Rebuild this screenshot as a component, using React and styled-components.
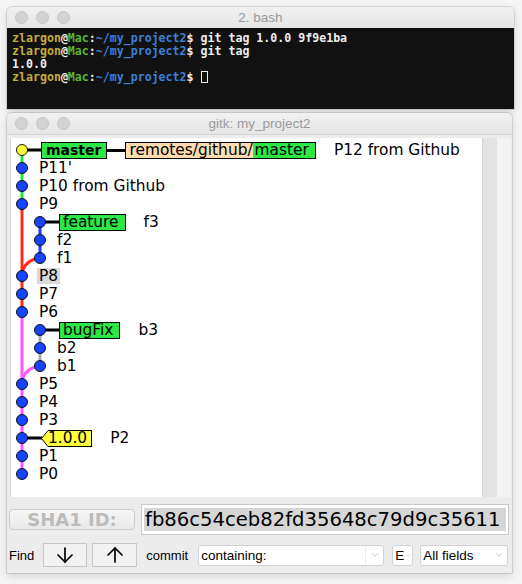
import React from 'react';
import styled, { createGlobalStyle } from 'styled-components';
import { ArrowDown, ArrowUp, ChevronDown } from 'lucide-react';

const GlobalStyle = createGlobalStyle`
  html, body {
    margin: 0;
    padding: 0;
    background: #f5f5f5;
  }
  body {
    font-family: "Liberation Sans", Arial, sans-serif;
  }
`;

const Page = styled.div`
  width: 522px;
  height: 584px;
  box-sizing: border-box;
  padding: 7px 0 0 7px;
  display: flex;
  flex-direction: column;
  gap: 4px;
  overflow: hidden;
`;

const Window = styled.div`
  width: ${(p) => p.$width}px;
  background: #ececec;
  border-radius: 5px 5px 0 0;
  box-shadow: 0 0 0 1px rgba(0, 0, 0, 0.1), 0 3px 9px rgba(0, 0, 0, 0.14);
  overflow: hidden;
  display: flex;
  flex-direction: column;
`;

const TitleBar = styled.div`
  height: 21px;
  display: grid;
  grid-template-columns: 1fr auto 1fr;
  align-items: center;
  padding: 0 8px;
  background: linear-gradient(#f0f0f0, #e6e6e6);
  border-bottom: 1px solid ${(p) => (p.$dark ? '#111' : '#d4d4d4')};
`;

const Lights = styled.div`
  display: flex;
  gap: 8px;
`;

const Light = styled.span`
  width: 11px;
  height: 11px;
  border-radius: 50%;
  background: #d3d3d3;
  border: 0.5px solid #c4c4c4;
`;

const Title = styled.div`
  font-size: 13.5px;
  color: #9a9a9a;
`;

const Terminal = styled.div`
  background: #111;
  height: 76px;
  padding: 3px 5px 1px;
  font-family: "DejaVu Sans Mono", monospace;
  font-weight: bold;
  font-size: 11.6px;
  line-height: 13px;
  color: #ededed;
  white-space: pre;
`;

const Seg = styled.span`
  color: ${(p) => p.$c};
`;

const Cursor = styled.span`
  display: inline-block;
  width: 5px;
  height: 10px;
  border: 1px solid #eee;
  vertical-align: -2px;
`;

const GitkBody = styled.div`
  display: flex;
  flex-direction: column;
  padding: 3px 1px 6px 3px;
`;

const GraphPane = styled.div`
  display: flex;
  height: 359px;
`;

const Canvas = styled.div`
  position: relative;
  flex: 1;
  background: #fff;
  padding-top: 3px;
  border-left: 1px solid #d8d8d8;
`;

const ScrollTrack = styled.div`
  width: 14px;
  background: #e3e3e3;
  border-left: 1px solid #d6d6d6;
`;

const Spare = styled.div`
  width: 14px;
  background: #f3f3f3;
`;

const GraphSvg = styled.svg`
  position: absolute;
  left: 0;
  top: 0;
  pointer-events: none;
`;

const Row = styled.div`
  position: relative;
  height: 18px;
  display: flex;
  align-items: center;
  padding-left: ${(p) => p.$indent}px;
  font-family: "DejaVu Sans", sans-serif;
  font-size: 15.4px;
  color: #000;
  white-space: nowrap;
`;

const Subject = styled.span`
  margin-left: ${(p) => (p.$after ? 18 : 0)}px;
  ${(p) =>
    p.$selected &&
    `
    background: #d9d9d9;
    margin-left: -2px;
    padding: 0 2px;
    line-height: 16px;
  `}
`;

const HeadBox = styled.span`
  display: inline-flex;
  align-items: center;
  height: 15px;
  border: 1px solid #000;
  background: #2ce845;
  padding: 0 ${(p) => (p.$bold ? 5 : 6)}px 0 ${(p) => (p.$bold ? 4 : 3)}px;
  font-weight: ${(p) => (p.$bold ? 700 : 400)};
  font-size: ${(p) => (p.$bold ? 14 : 15.4)}px;
`;

const Link = styled.span`
  width: 18px;
  height: 3px;
  background: #000;
`;

const RemoteBox = styled.span`
  display: inline-flex;
  height: 15px;
  border: 1px solid #000;
  line-height: 15px;
`;

const RemotePart = styled.span`
  background: ${(p) => (p.$head ? '#2ce845' : '#fedcb0')};
  padding: ${(p) => (p.$head ? '0 6px 0 2px' : '0 0 0 3px')};
`;

const Tag = styled.span`
  display: inline-flex;
  align-items: center;
`;

const TagBox = styled.span`
  height: 15px;
  line-height: 15px;
  background: #ffff3a;
  border: 1px solid #000;
  border-left: none;
  padding: 0 4px 0 0;
`;

const ShaRow = styled.div`
  display: flex;
  align-items: center;
  gap: 6px;
  margin: 7px 0 0 -1px;
`;

const ShaButton = styled.div`
  width: 124px;
  height: 19px;
  border: 1px solid #cbcbcb;
  border-radius: 4px;
  background: linear-gradient(#f6f6f6, #e9e9e9);
  color: #bcbcbc;
  font-family: "DejaVu Sans", sans-serif;
  font-weight: bold;
  font-size: 18px;
  display: flex;
  align-items: center;
  justify-content: center;
`;

const ShaEntry = styled.div`
  width: 362px;
  height: 23px;
  padding: 3px 2px 3px 2px;
  border: 1px solid #c9c9c9;
  background: #fff;
  display: flex;
`;

const ShaText = styled.span`
  flex: 1;
  background: #d6d6d6;
  font-family: "DejaVu Sans", sans-serif;
  font-size: 19.6px;
  line-height: 23px;
  padding-left: 1px;
  color: #000;
  white-space: nowrap;
  overflow: hidden;
`;

const FindBar = styled.div`
  display: flex;
  align-items: center;
  margin: 8px 0 0 -1px;
  font-size: 13px;
  color: #000;
`;

const Label = styled.span`
  margin-right: ${(p) => p.$gap}px;
`;

const ArrowButton = styled.div`
  width: ${(p) => p.$w}px;
  height: 22px;
  margin-right: ${(p) => p.$gap}px;
  border: 1px solid #c6c6c6;
  background: #f2f2f2;
  display: flex;
  align-items: center;
  justify-content: center;
`;

const Select = styled.div`
  width: ${(p) => p.$w}px;
  height: 21px;
  margin-right: ${(p) => p.$gap}px;
  box-sizing: border-box;
  border: 1px solid #d2d2d2;
  border-radius: 3px;
  background: #fff;
  display: flex;
  align-items: center;
  padding-left: 2px;
  font-size: 13.5px;
`;

const SelectText = styled.span`
  flex: 1;
  white-space: nowrap;
  overflow: hidden;
`;

const Caret = styled.span`
  width: ${(p) => p.$w}px;
  height: 100%;
  display: flex;
  align-items: center;
  justify-content: center;
  color: #a8a8a8;
  ${(p) => p.$divider && 'border-left: 1px solid #ececec;'}
`;

const rows = [
  { text: 'P12 from Github', master: true },
  { text: "P11'" },
  { text: 'P10 from Github' },
  { text: 'P9' },
  { text: 'f3', branch: true, head: 'feature' },
  { text: 'f2', branch: true },
  { text: 'f1', branch: true },
  { text: 'P8', selected: true },
  { text: 'P7' },
  { text: 'P6' },
  { text: 'b3', branch: true, head: 'bugFix' },
  { text: 'b2', branch: true },
  { text: 'b1', branch: true },
  { text: 'P5' },
  { text: 'P4' },
  { text: 'P3' },
  { text: 'P2', tag: '1.0.0' },
  { text: 'P1' },
  { text: 'P0' },
];

const rowY = (i) => 12 + 18 * i;

const CommitGraph = () => (
  <GraphSvg width="60" height="359">
    <g fill="none" strokeWidth="3">
      <path d="M11 12V66" stroke="#22e33e" />
      <path d="M11 66V174" stroke="#ff2c1c" />
      <path d="M29 120Q14 122 11 135" stroke="#ff2c1c" />
      <path d="M29 84V120" stroke="#1a3cff" />
      <path d="M11 174V336" stroke="#ff55ff" />
      <path d="M29 228Q14 230 11 243" stroke="#ff55ff" />
      <path d="M29 192V228" stroke="#a9a9a9" />
      <path d="M16 12H30M34 84H48M34 192H48M16 300H31" stroke="#000" />
    </g>
    {rows.map((r, i) => (
      <circle
        key={i}
        cx={r.branch ? 29 : 11}
        cy={rowY(i)}
        r="5.5"
        fill={i === 0 ? '#ffff3a' : '#1744ff'}
        stroke="#000"
        strokeWidth="0.9"
      />
    ))}
  </GraphSvg>
);

const Prompt = () => (
  <>
    <Seg $c="#c4ad3c">zlargon</Seg>
    <Seg $c="#ededed">@</Seg>
    <Seg $c="#5db52f">Mac</Seg>
    <Seg $c="#ededed">:</Seg>
    <Seg $c="#3c80d8">~/my_project2</Seg>
    <Seg $c="#ededed">$ </Seg>
  </>
);

const GraphRow = ({ row }) => {
  if (row.master) {
    return (
      <Row $indent={30}>
        <HeadBox $bold>master</HeadBox>
        <Link />
        <RemoteBox>
          <RemotePart>remotes/github/</RemotePart>
          <RemotePart $head>master</RemotePart>
        </RemoteBox>
        <Subject $after>{row.text}</Subject>
      </Row>
    );
  }
  if (row.head) {
    return (
      <Row $indent={48}>
        <HeadBox>{row.head}</HeadBox>
        <Subject $after>{row.text}</Subject>
      </Row>
    );
  }
  if (row.tag) {
    return (
      <Row $indent={30}>
        <Tag>
          <svg width="7" height="17">
            <polygon points="7.5,0.5 0.5,8.5 7.5,16.5" fill="#ffff3a" />
            <polyline points="7,0.5 0.5,8.5 7,16.5" fill="none" stroke="#000" />
          </svg>
          <TagBox>{row.tag}</TagBox>
        </Tag>
        <Subject $after>{row.text}</Subject>
      </Row>
    );
  }
  return (
    <Row $indent={row.branch ? 46 : 28}>
      <Subject $selected={row.selected}>{row.text}</Subject>
    </Row>
  );
};

const App = () => (
  <>
    <GlobalStyle />
    <Page>
      <Window $width={507}>
        <TitleBar $dark>
          <Lights>
            <Light />
            <Light />
            <Light />
          </Lights>
          <Title>2. bash</Title>
          <span />
        </TitleBar>
        <Terminal>
          <div>
            <Prompt />
            git tag 1.0.0 9f9e1ba
          </div>
          <div>
            <Prompt />
            git tag
          </div>
          <div>1.0.0</div>
          <div>
            <Prompt />
            <Cursor />
          </div>
        </Terminal>
      </Window>

      <Window $width={505}>
        <TitleBar>
          <Lights>
            <Light />
            <Light />
            <Light />
          </Lights>
          <Title>gitk: my_project2</Title>
          <span />
        </TitleBar>
        <GitkBody>
          <GraphPane>
            <Canvas>
              <CommitGraph />
              {rows.map((r, i) => (
                <GraphRow key={i} row={r} />
              ))}
            </Canvas>
            <ScrollTrack />
            <Spare />
          </GraphPane>

          <ShaRow>
            <ShaButton>SHA1 ID:</ShaButton>
            <ShaEntry>
              <ShaText>fb86c54ceb82fd35648c79d9c35611</ShaText>
            </ShaEntry>
          </ShaRow>

          <FindBar>
            <Label $gap={9}>Find</Label>
            <ArrowButton $w={42} $gap={5}>
              <ArrowDown size={24} strokeWidth={1.7} color="#000" />
            </ArrowButton>
            <ArrowButton $w={43} $gap={9}>
              <ArrowUp size={24} strokeWidth={1.7} color="#000" />
            </ArrowButton>
            <Label $gap={10}>commit</Label>
            <Select $w={186} $gap={8}>
              <SelectText>containing:</SelectText>
              <Caret $w={17} $divider>
                <ChevronDown size={10} strokeWidth={1.5} />
              </Caret>
            </Select>
            <Select $w={21} $gap={7}>
              <SelectText>E</SelectText>
              <Caret $w={7}>
                <ChevronDown size={7} strokeWidth={1.5} />
              </Caret>
            </Select>
            <Select $w={88} $gap={0}>
              <SelectText>All fields</SelectText>
              <Caret $w={17}>
                <ChevronDown size={10} strokeWidth={1.5} />
              </Caret>
            </Select>
          </FindBar>
        </GitkBody>
      </Window>
    </Page>
  </>
);

export default App;
